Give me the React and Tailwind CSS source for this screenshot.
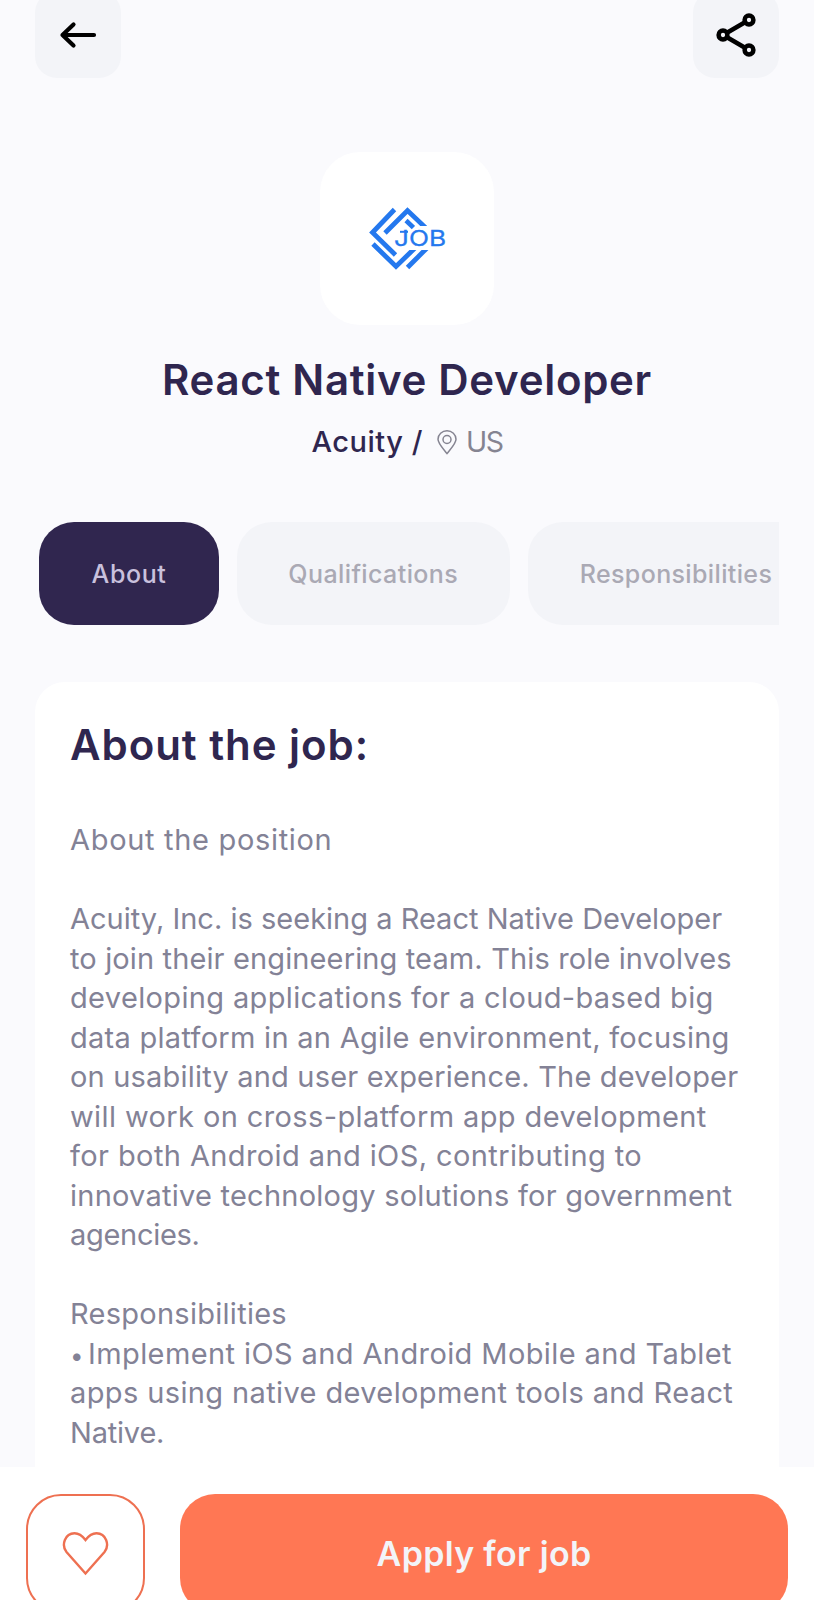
import { clsx } from 'clsx'

const paragraphs = [
  [{ text: 'About the position', tracking: 'tracking-[0.68px]' }],
  [
    { text: 'Acuity, Inc. is seeking a React Native Developer', tracking: 'tracking-[0.01px]' },
    { text: 'to join their engineering team. This role involves', tracking: 'tracking-[0.13px]' },
    { text: 'developing applications for a cloud-based big', tracking: 'tracking-[0.36px]' },
    { text: 'data platform in an Agile environment, focusing', tracking: 'tracking-[0.28px]' },
    { text: 'on usability and user experience. The developer', tracking: 'tracking-[0.19px]' },
    { text: 'will work on cross-platform app development', tracking: 'tracking-[0.39px]' },
    { text: 'for both Android and iOS, contributing to', tracking: 'tracking-[0.4px]' },
    { text: 'innovative technology solutions for government', tracking: 'tracking-[0.24px]' },
    { text: 'agencies.', tracking: 'tracking-[-0.3px]' },
  ],
  [
    { text: 'Responsibilities', tracking: 'tracking-[0.27px]' },
    { bullet: true, text: 'Implement iOS and Android Mobile and Tablet', tracking: 'tracking-[0.4px]' },
    { text: 'apps using native development tools and React', tracking: 'tracking-[0.38px]' },
    { text: 'Native.', tracking: 'tracking-[-0.2px]' },
  ],
]

const tabs = [
  { label: 'About', active: true, size: 'w-[180px] tracking-[0.6px]' },
  { label: 'Qualifications', size: 'w-[272.5px] tracking-[0.4px]' },
  { label: 'Responsibilities', size: 'w-[297px] tracking-[0.36px]' },
]

function IconButton({ label, children }) {
  return (
    <button aria-label={label} className="flex h-[87px] w-[86px] items-center justify-center rounded-[22px] bg-[#f3f4f8]">
      {children}
    </button>
  )
}

function JobLogo() {
  return (
    <svg width="86" height="76" viewBox="0 0 86 76" fill="none" stroke="#2478ee" strokeWidth="4.8" className="-mt-0.5 ml-0.5">
      <clipPath id="upper">
        <path d="M0 0h86v26H50L0 76Z" />
      </clipPath>
      <clipPath id="lower">
        <path d="M0 50h86v26H0Z" />
        <path d="M0 36h30v18H0Z" />
      </clipPath>
      <path d="M29.5 9.5 7.5 32.5 30.5 55" />
      <g clipPath="url(#upper)">
        <path d="M20 33 42.5 10.5 64 31" />
        <path d="M41 20.5 52 31" strokeWidth="4.5" />
      </g>
      <g clipPath="url(#lower)">
        <path d="M8 44 31 66.5 52 46" />
        <path d="M42.5 67.5 64 46" />
      </g>
      <path d="M35 31.8h8" strokeWidth="2" />
      <text x="29" y="46.4" textLength="52" lengthAdjust="spacingAndGlyphs" fontFamily="Inter, sans-serif" fontSize="21.5" fontWeight="400" fill="#2478ee" stroke="#2478ee" strokeWidth="0.3">JOB</text>
    </svg>
  )
}

export default function App() {
  return (
    <div className="flex h-[1600px] w-[814px] flex-col overflow-hidden bg-[#fafafd] font-['Inter','DM_Sans',sans-serif] text-[#2f264f]">
      <header className="-mt-[9px] flex shrink-0 justify-between px-[35px]">
        <IconButton label="Back">
          <svg width="38" height="28" viewBox="0 0 38 28" fill="none" stroke="#000" strokeWidth="4.2" strokeLinecap="round" strokeLinejoin="round" className="mr-px">
            <path d="M35 14H3.5M14.5 3.5 3.5 14l11 10.5" />
          </svg>
        </IconButton>
        <IconButton label="Share">
          <svg width="42" height="46" viewBox="0 0 42 46" fill="none" stroke="#000" strokeWidth="4.5">
            <circle cx="8" cy="23" r="4.4" />
            <circle cx="34" cy="8" r="4.4" />
            <circle cx="34" cy="38" r="4.4" />
            <path d="m12 20.7 18-10.4M12 25.3l18 10.4" />
          </svg>
        </IconButton>
      </header>

      <section className="mt-[74px] flex shrink-0 flex-col items-center">
        <div className="flex h-[173px] w-[174px] items-center justify-center rounded-[40px] bg-white">
          <JobLogo />
        </div>
        <h1 className="mt-[29px] h-[52px] text-[42px] leading-[52px] font-semibold tracking-[0.7px] whitespace-nowrap">React Native Developer</h1>
        <div className="mt-4 flex h-10 items-center text-[29px] leading-10">
          <span className="font-medium tracking-[0.5px]">Acuity /</span>
          <svg width="20" height="25" viewBox="0 0 20 25" fill="none" stroke="#858491" strokeWidth="1.5" className="ml-3.5">
            <path d="M10 23.5C6 18.5 1 13.5 1 9.3a9 8.5 0 0 1 18 0c0 4.2-5 9.2-9 14.2Z" />
            <circle cx="10" cy="9.5" r="4" />
          </svg>
          <span className="ml-[9px] text-[28.5px] tracking-[-1.5px] text-[#858491]">US</span>
        </div>
      </section>

      <nav className="mt-[60px] mr-[35px] ml-[39px] flex h-[103px] shrink-0 gap-[18px] overflow-hidden">
        {tabs.map((tab) => (
          <button
            key={tab.label}
            className={clsx(
              'shrink-0 rounded-[35px] pt-0.5 text-[25px] font-medium',
              tab.size,
              tab.active ? 'bg-[#30264f] text-[#c9c1dd]' : 'bg-[#f3f4f8] text-[#aaa9b4]',
            )}
          >
            {tab.label}
          </button>
        ))}
      </nav>

      <main className="mx-[35px] mt-[57px] min-h-0 flex-1 overflow-hidden rounded-t-[30px] bg-white px-[35px] pt-[37px]">
        <h2 className="h-[52px] text-[42px] leading-[52px] font-semibold tracking-[0.95px]">About the job:</h2>
        <div className="mt-[49px] flex flex-col gap-[39.52px] text-[29px] leading-[39.52px] text-[#838296]">
          {paragraphs.map((lines) => (
            <p key={lines[0].text}>
              {lines.map(({ text, tracking, bullet }) => (
                <span key={text} className={clsx('block whitespace-nowrap', tracking)}>
                  {bullet && <span className="inline-block w-[18px] text-[24px] leading-none">•</span>}
                  {text}
                </span>
              ))}
            </p>
          ))}
        </div>
      </main>

      <footer className="flex h-[133px] shrink-0 gap-[35px] bg-white px-[26px] pt-[27px]">
        <button aria-label="Save job" className="flex h-[119px] w-[119px] shrink-0 items-center justify-center rounded-[35px] border-2 border-[#ee7051]">
          <svg width="47" height="45" viewBox="0 0 47 45" fill="none" stroke="#ee7051" strokeWidth="2.4">
            <path d="M23.5 42.5 4.5 21C-1 14 3 2.2 12.5 2.2c5 0 8 2.8 11 6.8 3-4 6-6.8 11-6.8C44 2.2 48 14 42.5 21Z" />
          </svg>
        </button>
        <button className="h-[119px] w-[608px] shrink-0 rounded-[35px] bg-[#ff7754] text-[34px] font-semibold tracking-[0.3px] text-[#f3f4f8]">Apply for job</button>
      </footer>
    </div>
  )
}
